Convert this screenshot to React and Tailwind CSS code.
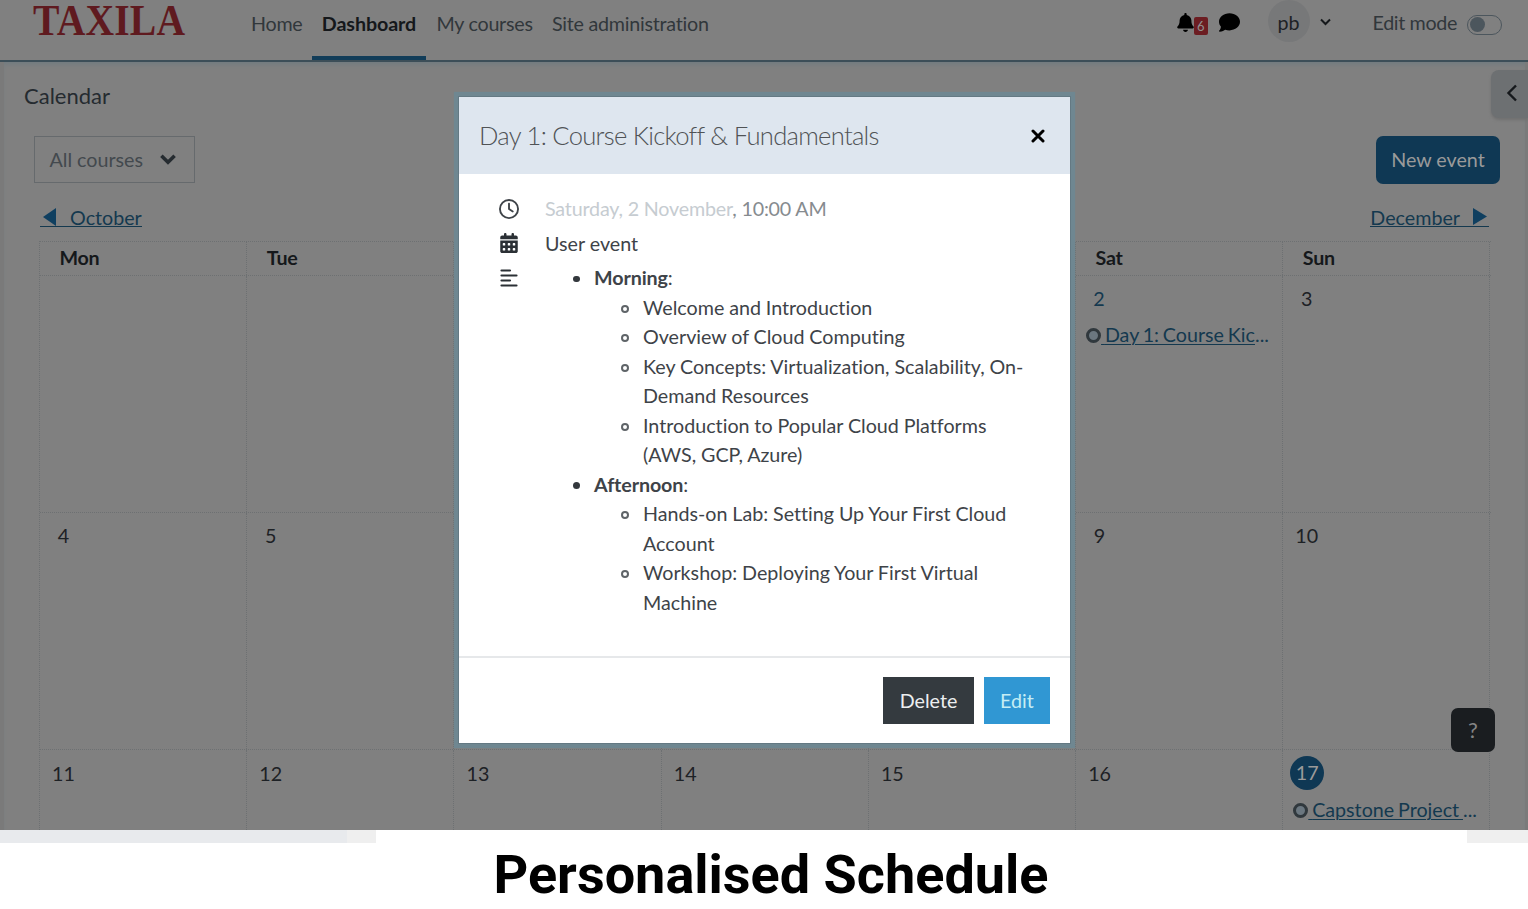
import React from "react";
import { FaBell, FaComment, FaRegClock, FaCalendarDays } from "react-icons/fa6";

const weekDays = ["Mon", "Tue", "", "", "", "Sat", "Sun"];

const weeks = [
  [{}, {}, {}, {}, {}, { day: 2, event: "Day 1: Course Kic", link: true }, { day: 3 }],
  [{ day: 4 }, { day: 5 }, {}, {}, {}, { day: 9 }, { day: 10 }],
  [
    { day: 11 },
    { day: 12 },
    { day: 13 },
    { day: 14 },
    { day: 15 },
    { day: 16 },
    { day: 17, event: "Capstone Project ", today: true },
  ],
];

const agenda = [
  {
    title: "Morning",
    items: [
      ["Welcome and Introduction"],
      ["Overview of Cloud Computing"],
      ["Key Concepts: Virtualization, Scalability, On-", "Demand Resources"],
      ["Introduction to Popular Cloud Platforms", "(AWS, GCP, Azure)"],
    ],
  },
  {
    title: "Afternoon",
    items: [
      ["Hands-on Lab: Setting Up Your First Cloud", "Account"],
      ["Workshop: Deploying Your First Virtual", "Machine"],
    ],
  },
];

function Header() {
  return (
    <header className="flex h-[62px] shrink-0 items-start border-b-2 border-[#3c4e58] text-[19.7px] leading-[30px] tracking-[-0.25px] text-[#31373b]">
      <div className="ml-[33px] w-[219px] origin-left scale-x-[0.9] whitespace-nowrap font-['Liberation_Serif'] text-[44px] font-bold leading-[42px] tracking-[0.2px] text-[#5f1a1f]">
        TAXILA
      </div>
      <nav className="flex h-[60px] whitespace-nowrap pt-[9px]">
        <a className="-ml-px w-[61px]">Home</a>
        <a className="w-[114px] border-b-4 border-[#123d59] text-center font-bold tracking-[-0.1px] text-[#15181b]">
          Dashboard
        </a>
        <a className="ml-[10.5px] w-[115.5px]">My courses</a>
        <a>Site administration</a>
      </nav>
      <div className="ml-auto flex h-[46px] items-center pr-[26px] text-black">
        <FaBell className="-mt-[2px] size-[19px]" />
        <span className="-ml-px mt-[6px] flex h-[18px] w-[14px] items-center justify-center rounded-[2px] bg-[#6c1d22] text-[13px] leading-none text-[#909090]">
          6
        </span>
        <FaComment className="ml-[11px] -mt-[2px] size-[21px]" />
        <span className="ml-[28px] -mt-[4px] flex size-[42px] items-center justify-center rounded-full bg-[#777879] pt-[3px] tracking-normal text-[#1d2125]">
          pb
        </span>
        <svg className="-mt-[2px] ml-[10px] h-[8px] w-[11px]" viewBox="0 0 11 8" fill="none" stroke="#15181b" strokeWidth="2">
          <path d="M1 1.5 5.5 6 10 1.5" />
        </svg>
        <span className="ml-[42px] tracking-[-0.35px] text-[#31373b]">Edit mode</span>
        <span className="ml-[10px] mt-[3px] flex h-[20px] w-[35px] items-center rounded-full border border-[#4c565d] pl-[2px]">
          <span className="size-[15px] rounded-full bg-[#4c565d]" />
        </span>
      </div>
    </header>
  );
}

function EventLink({ text }) {
  return (
    <div className="mt-[6px] flex items-center whitespace-nowrap pl-[10px] leading-[30px] text-[#14394f]">
      <span className="size-[15px] shrink-0 rounded-full border-[3px] border-[#30383d] bg-[#6b7780]" />
      <span className="whitespace-pre underline decoration-1 underline-offset-[2px] [word-spacing:-1.2px]"> {text}</span>
      <span>...</span>
    </div>
  );
}

function dayClass(cell) {
  if (cell.today) return "ml-[7px] -mt-[3px] -mb-[1px] flex size-[34px] items-center justify-center rounded-full bg-[#0f3854] text-[#9a9a9a]";
  if (cell.link) return "ml-[6px] h-[30px] w-[34px] text-center leading-[30px] text-[#14394f]";
  return "ml-[6.5px] h-[30px] w-[34px] text-center leading-[30px] text-[#1d2125]";
}

function DayCell({ cell, last }) {
  return (
    <div className={last ? "min-w-0 border-r border-dotted border-[#6d7072] pt-[9px]" : "min-w-0 border-r border-dotted border-[#6d7072] pt-[8px]"}>
      {cell.day && <div className={dayClass(cell)}>{cell.day}</div>}
      {cell.event && <EventLink text={cell.event} />}
    </div>
  );
}

function Calendar() {
  return (
    <main className="flex min-h-0 flex-1 flex-col border-x-4 border-r-[3px] border-[#7a7a7a] text-[19.7px] shadow-[inset_0_4px_5px_-2px_#707b80]">
      <div className="flex h-[74px] items-start justify-between pl-[20px]">
        <h1 className="mt-[17px] text-[22px] leading-[34px] text-[#252b30]">Calendar</h1>
        <div className="-mr-[3px] mt-[8px] flex h-[48px] w-[37px] items-center justify-center rounded-l-[8px] bg-[#6d7072] pl-[4px] shadow-[0_2px_3px_#707070]">
          <svg className="-mt-[2px] h-[18px] w-[12px]" viewBox="0 0 12 18" fill="none" stroke="#15181b" strokeWidth="2.4">
            <path d="M10 1.5 2.5 9 10 16.5" />
          </svg>
        </div>
      </div>
      <div className="flex h-[48px] justify-between pl-[29.5px] pr-[25px]">
        <button className="flex h-[47px] w-[161px] items-center border border-[#666a6d] pl-[15px] text-[#43494e]">
          All courses
          <svg className="ml-[17px] h-[11px] w-[16px]" viewBox="0 0 16 11" fill="none" stroke="#252b30" strokeWidth="3.6">
            <path d="M1.4 1.8 8 8.2 14.6 1.8" />
          </svg>
        </button>
        <button className="h-[48px] w-[124px] rounded-[7px] bg-[#0f3854] text-[#9a9a9a]">New event</button>
      </div>
      <div className="flex h-[57px] justify-between pl-[36px] pr-[36px] pt-[17px] leading-[30px] text-[#14394f]">
        <a className="flex h-[26px] items-center border-b border-[#14394f]">
          <svg className="ml-[3px] mr-[14px] mt-[6px] h-[18px] w-[13px]" viewBox="0 0 13 18">
            <path d="M0 9 13 0v18z" fill="#0f3f60" />
          </svg>
          <span className="pt-[9px]">October</span>
        </a>
        <a className="flex h-[26px] items-center border-b border-[#14394f]">
          <span className="pt-[9px]">December</span>
          <svg className="ml-[13px] mr-[2px] mt-[6px] h-[17px] w-[14px]" viewBox="0 0 14 17">
            <path d="M14 8.5 0 0v17z" fill="#0f3f60" />
          </svg>
        </a>
      </div>
      <div className="ml-[35px] flex w-[1451.5px] flex-1 flex-col border-l border-t border-dotted border-[#6d7072]">
        <div className="grid h-[34px] grid-cols-7 border-b border-dotted border-[#6d7072] font-bold tracking-[-0.25px] text-[#15181b]">
          {weekDays.map((d, i) => (
            <div key={i} className="border-r border-dotted border-[#6d7072] pl-[19.5px] leading-[32px]">
              {d}
            </div>
          ))}
        </div>
        {weeks.map((week, i) => (
          <div key={i} className="grid h-[237px] grid-cols-7 border-b border-dotted border-[#6d7072] last:h-[80px] last:border-b-0">
            {week.map((cell, j) => (
              <DayCell key={j} cell={cell} last={i === weeks.length - 1} />
            ))}
          </div>
        ))}
      </div>
    </main>
  );
}

function EventDialog() {
  return (
    <section className="absolute left-[459px] top-[97px] flex h-[646px] w-[611px] flex-col bg-white text-[19.7px] text-[#3e4348] shadow-[0_0_0_1px_#647983,0_0_1px_5px_#6f8791]">
      <div className="flex h-[77px] items-center justify-between bg-[#dee6ef] pl-[20px] pr-[25px]">
        <h2 className="whitespace-nowrap text-[25.6px] font-light tracking-[-0.72px] text-[#505356]">
          Day 1: Course Kickoff &amp; Fundamentals
        </h2>
        <svg className="h-[14px] w-[14px]" viewBox="0 0 14 14" stroke="#000" strokeWidth="3" strokeLinecap="round">
          <path d="M2 2 12 12M12 2 2 12" />
        </svg>
      </div>
      <div className="flex flex-1 flex-col pl-[40px] pt-[20px] leading-[29.5px]">
        <div className="flex h-[34.5px] items-start">
          <FaRegClock className="mr-[26px] mt-[5px] size-[20px]" />
          <p className="whitespace-nowrap tracking-[-0.18px] text-[#868b8f]">
            <span className="text-[#c6ccd1]">Saturday, 2 November</span>, 10:00 AM
          </p>
        </div>
        <div className="flex h-[34.5px] items-start">
          <FaCalendarDays className="mr-[26px] mt-[4px] size-[20px] text-[#2b3035]" />
          <p>User event</p>
        </div>
        <div className="flex items-start">
          <svg className="ml-[1px] mt-[6px] h-[18px] w-[18px] text-[#2b3035]" viewBox="0 0 18 18" stroke="currentColor" strokeWidth="2.2" strokeLinecap="round">
            <path d="M1.5 1.5H10M1.5 6.5H16.5M1.5 11.5H10M1.5 16.5H16.5" />
          </svg>
          <ul className="ml-[55px] whitespace-nowrap">
            {agenda.map((part) => (
              <li key={part.title}>
                <div className="flex items-center">
                  <span className="mt-[2px] size-[6.5px] rounded-full bg-[#33383d]" />
                  <span className="ml-[14.5px] tracking-[-0.1px]">
                    <b>{part.title}</b>:
                  </span>
                </div>
                <ul className="pl-[48px] [font-variant-ligatures:none]">
                  {part.items.map((lines) => (
                    <li key={lines[0]} className="flex">
                      <span className="mt-[12px] size-[8px] shrink-0 rounded-full border-2 border-[#5f6468]" />
                      <span className="ml-[14px] [word-spacing:-0.2px]">
                        {lines.map((line) => (
                          <span key={line} className="block">
                            {line}
                          </span>
                        ))}
                      </span>
                    </li>
                  ))}
                </ul>
              </li>
            ))}
          </ul>
        </div>
      </div>
      <div className="flex h-[87px] justify-end gap-[10px] border-t-2 border-[#e6e8ea] pr-[20px] pt-[19px]">
        <button className="h-[47px] w-[91px] bg-[#343a3f] text-[#eceef0]">Delete</button>
        <button className="h-[47px] w-[66px] bg-[#3097d3] text-[#c5edf4]">Edit</button>
      </div>
    </section>
  );
}

export default function App() {
  return (
    <div className="relative flex h-[909px] w-[1528px] flex-col overflow-hidden bg-white font-['Lato',sans-serif]">
      <div className="flex h-[830px] shrink-0 flex-col overflow-hidden bg-[#808080]">
        <Header />
        <Calendar />
      </div>
      <div className="flex h-[13px] shrink-0">
        <span className="w-[347px] bg-[#e8eaed]" />
        <span className="w-[29px] bg-[#efefef]" />
        <span className="ml-auto w-[61px] bg-[#efefef]" />
      </div>
      <h1 className="ml-[14px] text-center font-['Roboto',sans-serif] text-[54px] font-bold leading-[64px] text-black">
        Personalised Schedule
      </h1>
      <EventDialog />
      <button className="absolute left-[1451px] top-[708px] size-[44px] rounded-[7px] bg-[#1a1d20] pb-[2px] text-[22px] text-[#858585]">
        ?
      </button>
    </div>
  );
}
